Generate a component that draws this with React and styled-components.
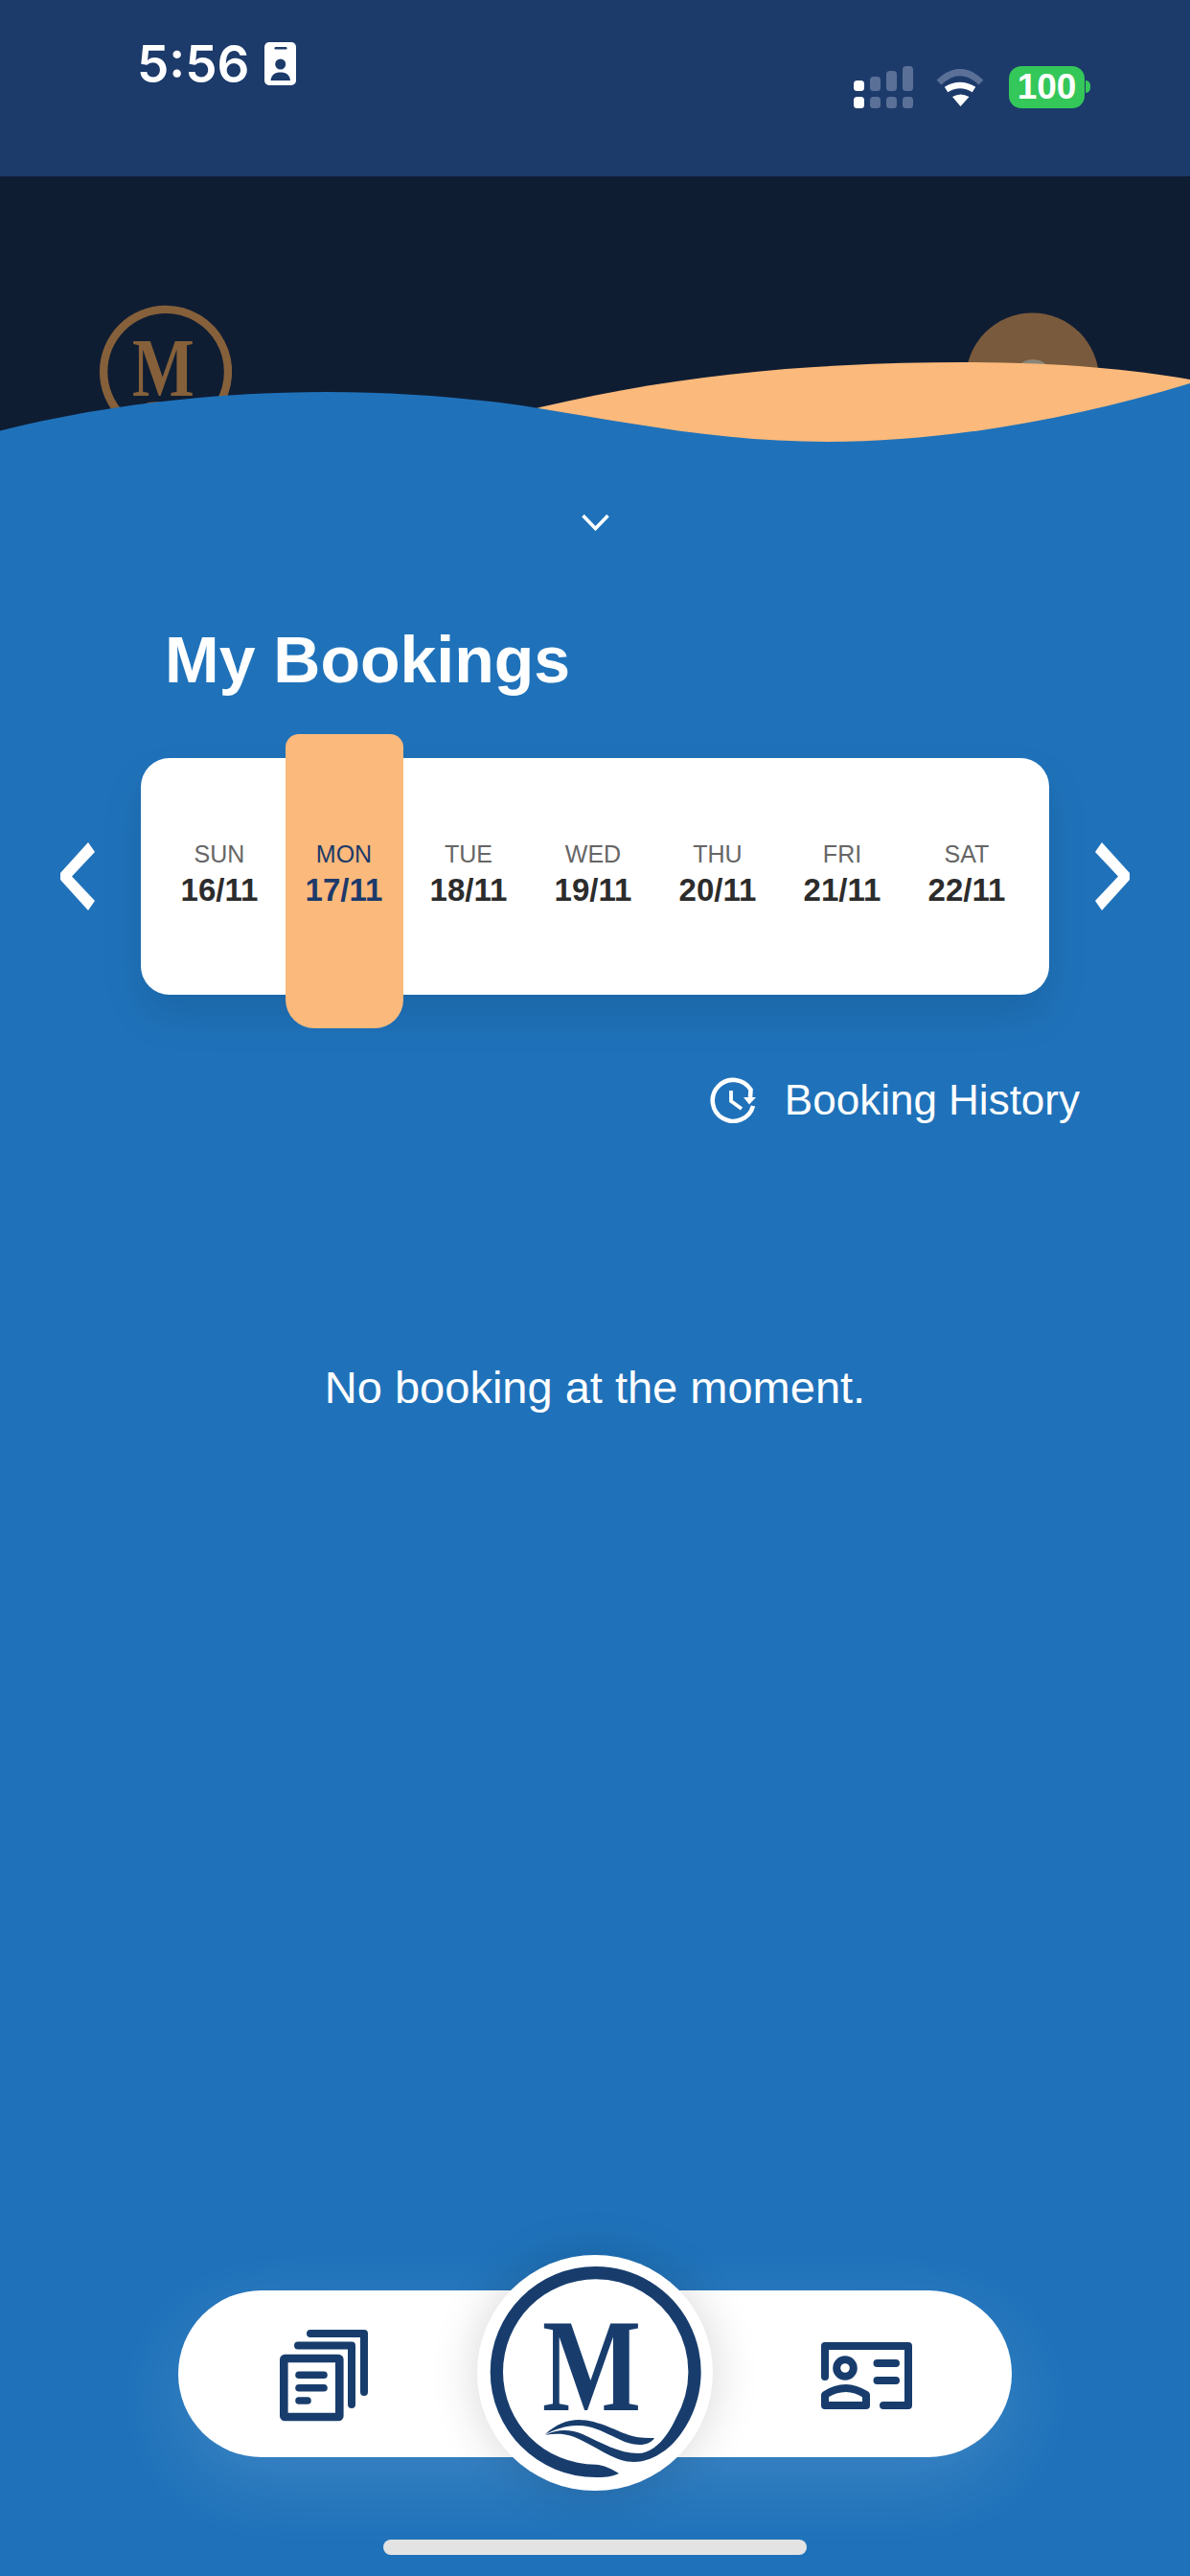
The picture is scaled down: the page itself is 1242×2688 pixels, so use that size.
import React from 'react'
import styled, { createGlobalStyle } from 'styled-components'

const colors = {
  navy: '#1c3a6a',
  logo: '#183d6d',
  ink: '#0f1d33',
  blue: '#1f72ba',
  orange: '#fbb97b',
  green: '#34c759',
}

const GlobalStyle = createGlobalStyle`
  html, body {
    margin: 0;
    padding: 0;
    background: ${colors.blue};
    font-family: "Liberation Sans", Arial, sans-serif;
  }
`

const Page = styled.div`
  position: relative;
  display: flex;
  flex-direction: column;
  width: 1242px;
  height: 2688px;
  overflow: hidden;
  background: ${colors.blue};
`

// status bar
const StatusBar = styled.div`
  display: flex;
  justify-content: space-between;
  align-items: flex-start;
  box-sizing: border-box;
  height: 184px;
  padding: 42px 104px 0 143px;
  background: ${colors.navy};
`

const StatusLeft = styled.div`
  display: flex;
  align-items: center;
  gap: 16px;
  height: 48px;
`

const Time = styled.span`
  margin-top: 2px;
  font-family: Inter, "Liberation Sans", sans-serif;
  font-size: 53px;
  font-weight: 600;
  line-height: 48px;
  color: #fff;
`

const StatusRight = styled.div`
  display: flex;
  align-items: center;
  height: 48px;
  margin-top: 25px;
`

const Wifi = styled.svg`
  margin: 0 25px 0 23px;
`

const Battery = styled.div`
  position: relative;
  display: flex;
  align-items: center;
  justify-content: center;
  width: 79px;
  height: 44px;
  margin-right: 6px;
  border-radius: 13px;
  background: ${colors.green};
  color: #fff;
  font-size: 37px;
  font-weight: 700;
  line-height: 44px;

  &::after {
    content: '';
    position: absolute;
    top: 15px;
    right: -6px;
    width: 5px;
    height: 13px;
    border-radius: 0 6px 6px 0;
    background: ${colors.green};
  }
`

// dark header behind the wave
const Header = styled.div`
  position: relative;
  display: flex;
  justify-content: space-between;
  align-items: flex-start;
  box-sizing: border-box;
  height: 300px;
  padding: 119px 95px 0 84px;
  background: ${colors.ink};
`

const Wave = styled.svg`
  position: absolute;
  left: 0;
  bottom: 0;
  display: block;
`

const Avatar = styled.svg`
  margin-top: 23px;
`

const LogoSvg = styled.svg`
  display: block;
  color: ${(p) => p.$color};
`

const LogoText = styled.text`
  font-family: "Liberation Serif", "Times New Roman", serif;
  font-size: 138px;
  font-weight: 700;
  fill: currentColor;
`

const Logo = ({ size, color }) => (
  <LogoSvg $color={color} width={size} height={size} viewBox="0 0 280 280">
    <path
      fill="currentColor"
      d="M166 241 C158 245 150 245 141.7 245 A110 110 0 0 1 141.7 25 A110 110 0 0 1 231.8 198 C220 216 200 229 182 229 C162 229 146 215 124 205 C112 199 100 199 89 201 C102 194 116 195 128 200 C148 209 166 220 186 220 C202 220 216 204 225.4 183.4 A96.7 96.7 0 0 0 141.7 38.3 A96.7 96.7 0 0 0 141.7 231.7 C150 232 158 236 166 241 Z"
    />
    <path
      fill="currentColor"
      d="M89 200 C100 190 112 185 124 185 C145 185 165 198 180 202 C188 204 196 204 203 204 C198 212 186 213 172 208 C155 201 140 190 122 191 C110 191 100 195 89 200 Z"
    />
    <LogoText x="86" y="175" textLength="103" lengthAdjust="spacingAndGlyphs">
      M
    </LogoText>
  </LogoSvg>
)

// main content
const Content = styled.div`
  display: flex;
  flex-direction: column;
  flex: 1;
`

const Collapse = styled.svg`
  align-self: center;
  margin-top: 52px;
  transform: translateX(0.5px);
`

const Title = styled.h1`
  margin: 94px 0 0;
  padding-left: 172px;
  color: #fff;
  font-size: 68px;
  font-weight: 700;
  line-height: 80px;
`

const WeekRow = styled.div`
  display: flex;
  align-items: center;
  gap: 48px;
  margin-top: 63px;
  padding-left: 63px;
`

const Arrow = styled.svg`
  flex: none;
  transform: ${(p) => (p.$flip ? 'scaleX(-1)' : 'none')};
`

const WeekCard = styled.div`
  display: grid;
  grid-template-columns: repeat(7, 130px);
  box-sizing: border-box;
  width: 948px;
  height: 247px;
  padding-left: 17px;
  border-radius: 30px;
  background: #fff;
  box-shadow: 0 22px 44px rgba(0, 0, 0, 0.1);
`

const Day = styled.div`
  position: relative;
  display: flex;
  flex-direction: column;
  align-items: center;
  justify-content: center;
  padding-bottom: 5px;

  &::before {
    content: '';
    display: ${(p) => (p.$active ? 'block' : 'none')};
    position: absolute;
    top: -25px;
    bottom: -35px;
    left: 4px;
    right: 3px;
    border-radius: 14px 14px 30px 30px;
    background: ${colors.orange};
  }
`

const DayName = styled.span`
  position: relative;
  color: ${(p) => (p.$active ? colors.navy : '#666')};
  font-size: 25px;
  line-height: 30px;
`

const DayDate = styled.span`
  position: relative;
  margin-top: 3px;
  color: ${(p) => (p.$active ? colors.navy : '#2c2c2c')};
  font-size: 33px;
  font-weight: 700;
  line-height: 40px;
`

const HistoryLink = styled.div`
  display: flex;
  justify-content: flex-end;
  align-items: center;
  gap: 30px;
  margin-top: 86px;
  padding-right: 115px;
  color: #fff;
  font-size: 44px;
  line-height: 48px;
`

const EmptyText = styled.p`
  margin: 252px 0 0;
  color: #fff;
  font-size: 47px;
  line-height: 48px;
  text-align: center;
`

// bottom nav
const NavBar = styled.div`
  position: relative;
  display: flex;
  justify-content: space-between;
  align-items: center;
  box-sizing: border-box;
  width: 870px;
  height: 174px;
  margin: auto 0 0 186px;
  padding: 3px 104px 0 106px;
  border-radius: 87px;
  background: #fff;
  box-shadow: 0 26px 80px rgba(255, 255, 255, 0.13);
`

const LogoDisc = styled.div`
  position: absolute;
  top: -37px;
  left: 312px;
  width: 246px;
  height: 246px;
  border-radius: 50%;
  background: #fff;
  box-shadow: 0 0 50px rgba(0, 0, 0, 0.16);

  svg {
    margin: -13px 0 0 -18px;
  }
`

const HomeIndicator = styled.div`
  align-self: center;
  width: 442px;
  height: 16px;
  margin: 86px 0 22px;
  border-radius: 8px;
  background: #e3e3e3;
`

const days = [
  ['SUN', '16/11'],
  ['MON', '17/11'],
  ['TUE', '18/11'],
  ['WED', '19/11'],
  ['THU', '20/11'],
  ['FRI', '21/11'],
  ['SAT', '22/11'],
]

const signalTop = [
  [83, 11],
  [79, 15],
  [73, 21],
  [68, 26],
]

const ArrowIcon = ({ flip }) => (
  <Arrow $flip={flip} width="36" height="71" viewBox="63 879 36 71">
    <polygon fill="#fff" points="92,879 99,889 75,914.5 99,940 92,950 63,918 63,911" />
  </Arrow>
)

export default function App() {
  return (
    <Page>
      <GlobalStyle />
      <StatusBar>
        <StatusLeft>
          <Time>5:56</Time>
          <svg width="33" height="45" viewBox="0 0 33 45">
            <rect width="33" height="45" rx="5" fill="#fff" />
            <rect x="10.5" y="5" width="13" height="2.5" rx="1.2" fill={colors.navy} />
            <circle cx="16.7" cy="23" r="5.5" fill={colors.navy} />
            <path d="M6.5 40 C7 34 11 31.5 16.7 31.5 C22.5 31.5 26.5 34 27 40 Z" fill={colors.navy} />
          </svg>
        </StatusLeft>
        <StatusRight>
          <svg width="62" height="44" viewBox="891 68 62 44">
            {signalTop.map(([y, h], i) => (
              <rect
                key={y}
                x={891 + i * 17}
                y={y}
                width="11"
                height={h}
                rx="3.5"
                fill={i === 0 ? '#fff' : '#5a7096'}
              />
            ))}
            {signalTop.map(([y], i) => (
              <rect
                key={y}
                x={891 + i * 17}
                y="100"
                width="11"
                height="12"
                rx="3.5"
                fill={i === 0 ? '#fff' : '#5a7096'}
              />
            ))}
          </svg>
          <Wifi width="52" height="39" viewBox="0 0 52 39" fill="none">
            <path d="M4 14 Q26 -7 48 14" stroke="#5a7096" strokeWidth="7" />
            <path d="M11.5 21.5 Q26 12.5 40.5 21.5" stroke="#fff" strokeWidth="6.5" />
            <path d="M26.5 39 L18 29 Q26.5 24 35.5 29 Z" fill="#fff" />
          </Wifi>
          <Battery>100</Battery>
        </StatusRight>
      </StatusBar>

      <Header>
        <Logo size={176} color="#85603a" />
        <Avatar width="139" height="140" viewBox="0 0 139 140">
          <circle cx="69.5" cy="70" r="69.5" fill="#7a5a3c" />
          <circle cx="70" cy="70" r="21" fill="#8a8578" />
        </Avatar>
        <Wave width="1242" height="114" viewBox="0 370 1242 114">
          <path
            fill={colors.orange}
            d="M540 431 C680 395 830 378 1006 378 C1100 378 1180 385 1242 396 V484 H540 Z"
          />
          <path
            fill={colors.blue}
            d="M0 449.5 C100 424 220 409 341 409 C420 409 499 416 559 425.5 C650 440 750 461 864 461 C980 461 1110 440 1242 400 V484 H0 Z"
          />
        </Wave>
      </Header>

      <Content>
        <Collapse width="30" height="18" viewBox="0 0 30 18" fill="none">
          <path d="M2 2 L15 15.5 L28 2" stroke="#fff" strokeWidth="3.6" />
        </Collapse>
        <Title>My Bookings</Title>

        <WeekRow>
          <ArrowIcon />
          <WeekCard>
            {days.map(([name, date]) => (
              <Day key={name} $active={name === 'MON'}>
                <DayName $active={name === 'MON'}>{name}</DayName>
                <DayDate $active={name === 'MON'}>{date}</DayDate>
              </Day>
            ))}
          </WeekCard>
          <ArrowIcon flip />
        </WeekRow>

        <HistoryLink>
          <svg width="48" height="48" viewBox="20 24 48 48" fill="none" stroke="#fff">
            <path d="M65 54 A21.5 21.5 0 1 1 62.5 37 L62 45" strokeWidth="4.6" />
            <path d="M42 38 V49 L53 57" strokeWidth="3.8" />
            <polygon points="55,45 68,45 61,52.5" fill="#fff" stroke="none" />
          </svg>
          Booking History
        </HistoryLink>

        <EmptyText>No booking at the moment.</EmptyText>

        <NavBar>
          <svg width="92" height="97" viewBox="22 20 92 97" fill="none" stroke={colors.logo} strokeLinecap="round" strokeLinejoin="round">
            <rect x="26.3" y="51" width="58" height="61" rx="1" strokeWidth="8.6" />
            <path d="M42 68.3 H68 M42 81.7 H68 M42 95 H51" strokeWidth="7.6" />
            <path d="M41 37.5 H97 V99" strokeWidth="8" />
            <path d="M54 25 H110 V86" strokeWidth="8" />
          </svg>
          <LogoDisc>
            <Logo size={280} color={colors.logo} />
          </LogoDisc>
          <svg width="95" height="70" viewBox="17 23 95 70" fill="none" stroke={colors.logo} strokeWidth="8" strokeLinecap="round" strokeLinejoin="round">
            <path d="M21 59 V27 H108 V89 H82" />
            <circle cx="42" cy="50" r="8.8" />
            <path d="M21 89 V78 C30 72 36 71 43 71 C50 71 56 73 64 78 V89 Z" />
            <path d="M75.5 45 H95 M75.5 63 H95" />
          </svg>
        </NavBar>
        <HomeIndicator />
      </Content>
    </Page>
  )
}
